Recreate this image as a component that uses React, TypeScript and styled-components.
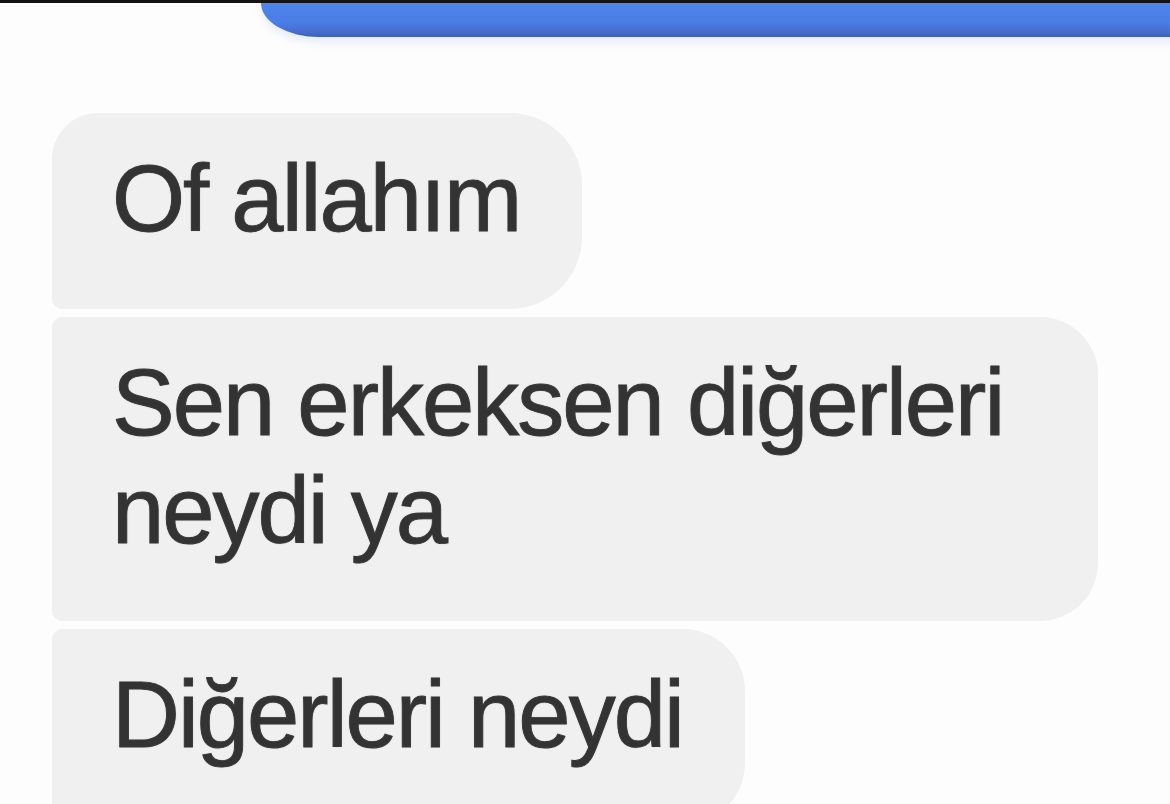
import React from "react";
import styled, { createGlobalStyle, css } from "styled-components";

const GlobalStyle = createGlobalStyle`
  html, body {
    margin: 0;
    padding: 0;
    background: #ffffff;
    overflow: hidden;
  }
  * { box-sizing: border-box; }
`;

const Page = styled.div`
  display: flex;
  flex-direction: column;
  width: 1170px;
  height: 804px;
  overflow: hidden;
  background: #fdfdfd;
  font-family: "Liberation Sans", Arial, sans-serif;
`;

const TopRule = styled.div`
  height: 3px;
  background: #141414;
  flex-shrink: 0;
`;

const SentRow = styled.div`
  display: flex;
  padding-left: 261px;
  flex-shrink: 0;
`;

const SentBubble = styled.div`
  flex: 1;
  height: 34px;
  margin-right: -20px;
  background: linear-gradient(to bottom, #4e84ec 0%, #4a7ee6 55%, #4670d2 82%, #3f60b4 100%);
  border-bottom-left-radius: 58px 34px;
  box-shadow: 0 5px 9px rgba(90, 130, 220, 0.14);
`;

const Thread = styled.div`
  display: flex;
  flex-direction: column;
  align-items: flex-start;
  gap: 8px;
  padding: 76px 0 0 52px;
`;

type Pos = "first" | "middle" | "last";

const radii: Record<Pos, ReturnType<typeof css>> = {
  first: css`border-radius: 46px 72px 72px 10px;`,
  middle: css`border-radius: 10px 58px 58px 10px;`,
  last: css`border-radius: 10px 62px 62px 10px;`,
};

const Bubble = styled.div<{ $pos: Pos }>`
  max-width: 1046px;
  padding: 32px 62px 56px 60px;
  background: #f0f0f0;
  color: #333333;
  font-size: 94px;
  line-height: 108px;
  letter-spacing: -2px;
  -webkit-text-stroke: 0.9px #383838;
  text-shadow: 0 0 1.5px rgba(40, 40, 40, 0.35);
  ${(p) => radii[p.$pos]}
`;

const messages: { text: string; pos: Pos }[] = [
  { text: "Of allahım", pos: "first" },
  { text: "Sen erkeksen diğerleri neydi ya", pos: "middle" },
  { text: "Diğerleri neydi", pos: "last" },
];

export default function App() {
  return (
    <>
      <GlobalStyle />
      <Page>
        <TopRule />
        <SentRow>
          <SentBubble />
        </SentRow>
        <Thread>
          {messages.map((m) => (
            <Bubble key={m.text} $pos={m.pos}>
              {m.text}
            </Bubble>
          ))}
        </Thread>
      </Page>
    </>
  );
}
